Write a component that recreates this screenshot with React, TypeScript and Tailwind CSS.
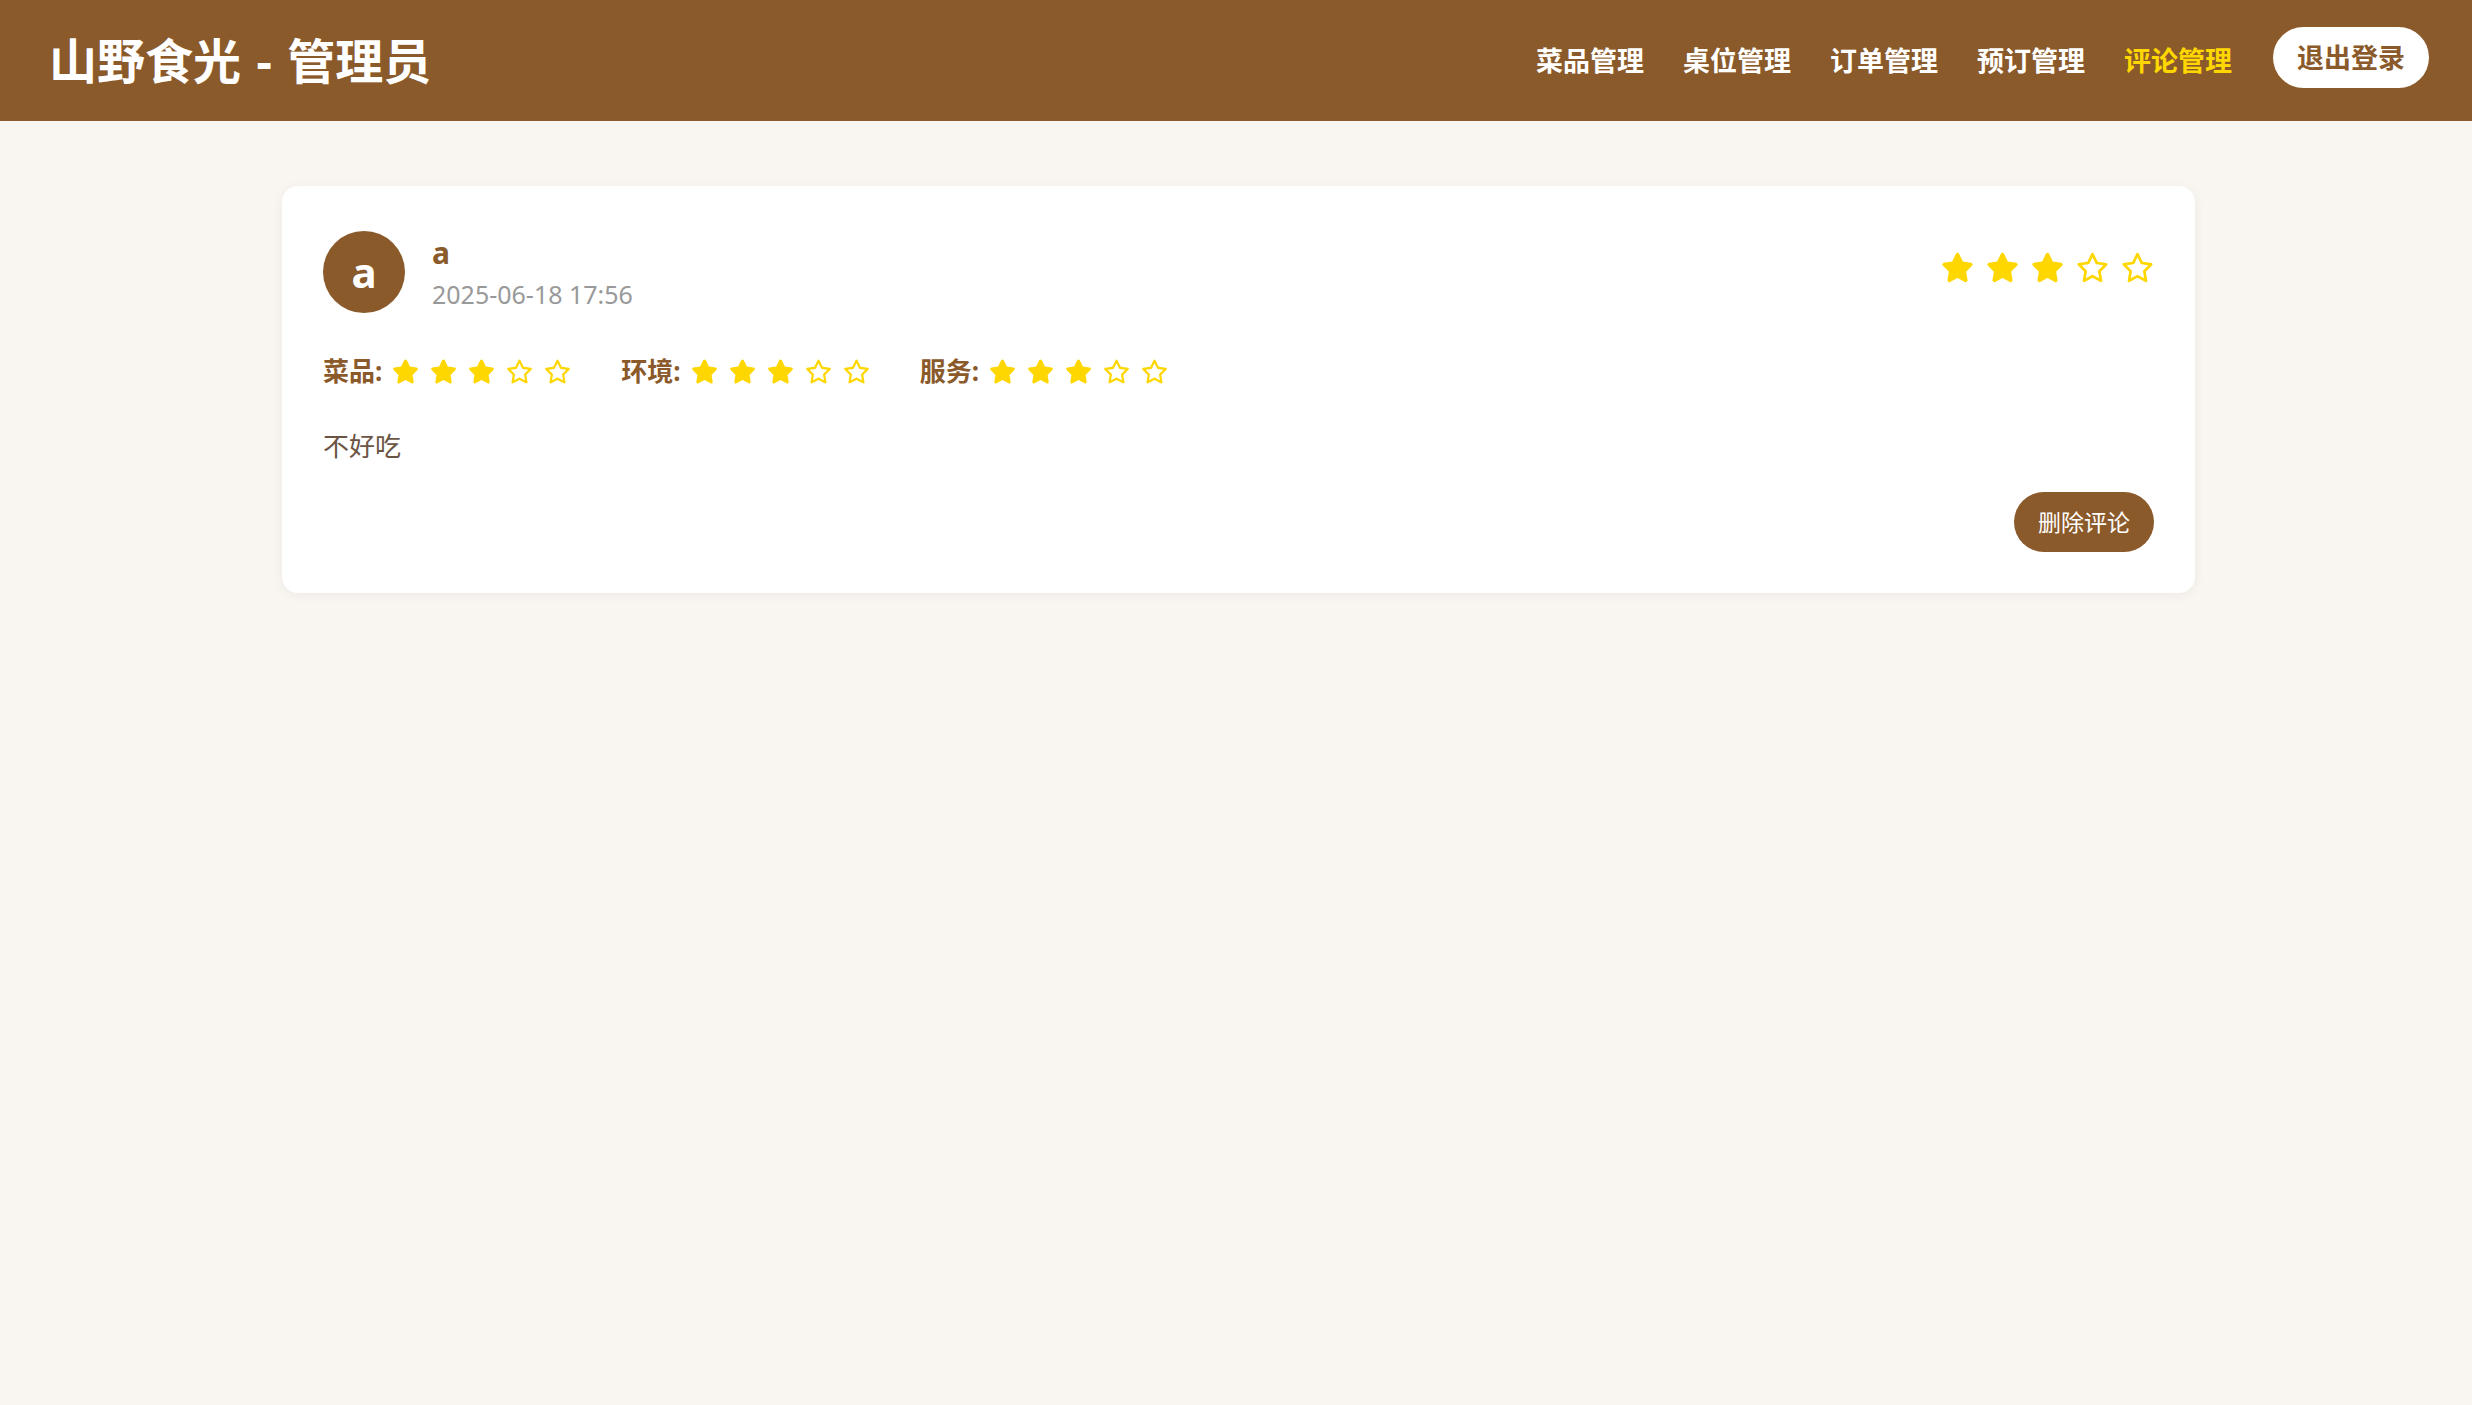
import React from "react";
import { FaStar, FaRegStar } from "react-icons/fa6";

const FONT = { fontFamily: '"Noto Sans", "Noto Sans CJK SC", sans-serif' };

function Stars({ value, size, gap }: { value: number; size: number; gap: string }) {
  return (
    <div className={`flex items-center ${gap}`}>
      {[1, 2, 3, 4, 5].map((i) =>
        i <= value ? (
          <FaStar key={i} size={size} className="text-[#FFD700] shrink-0" />
        ) : (
          <FaRegStar key={i} size={size} className="text-[#FFD700] shrink-0" />
        )
      )}
    </div>
  );
}

function SubRating({ label, value }: { label: string; value: number }) {
  return (
    <div className="flex items-center gap-[10px]">
      <span className="text-[26px] leading-[37px] font-bold text-[#8B5A2B]">{label}:</span>
      <Stars value={value} size={27} gap="gap-[11px]" />
    </div>
  );
}

export default function App() {
  const nav = ["菜品管理", "桌位管理", "订单管理", "预订管理", "评论管理"];
  return (
    <div className="min-h-screen w-full bg-[#f9f6f1]" style={FONT}>
      <header className="h-[121px] bg-[#8B5A2B] flex items-center justify-between pl-[49px] pr-[43px]">
        <h1 className="text-[48px] leading-none font-bold text-white [word-spacing:3px]">山野食光 - 管理员</h1>
        <nav className="flex items-center">
          <ul className="flex items-center gap-[39px]">
            {nav.map((n) => (
              <li
                key={n}
                className={`text-[27px] leading-[40px] font-bold ${
                  n === "评论管理" ? "text-[#FFD700]" : "text-white"
                }`}
              >
                {n}
              </li>
            ))}
          </ul>
          <button className="ml-[41px] mb-[6px] rounded-full bg-white px-[24px] py-[10px] text-[27px] leading-[41px] font-bold text-[#8B5A2B]">
            退出登录
          </button>
        </nav>
      </header>

      <main className="pt-[65px] pl-[5px]">
        <div className="mx-auto w-[1913px] rounded-[16px] bg-white px-[41px] pt-[44px] pb-[41px] shadow-[0_2px_12px_rgba(0,0,0,0.05)]">
          <div className="flex items-start justify-between">
            <div className="flex items-center gap-[27px]">
              <div className="flex h-[82px] w-[82px] items-center justify-center rounded-full bg-[#8B5A2B] text-[42px] leading-none font-bold text-white">
                a
              </div>
              <div className="flex flex-col">
                <span className="text-[30px] leading-[45px] font-bold text-[#8B5A2B]">a</span>
                <span className="text-[25px] leading-[38px] text-[#999999]">2025-06-18 17:56</span>
              </div>
            </div>
            <div className="mt-[21px]">
              <Stars value={3} size={33} gap="gap-[12px]" />
            </div>
          </div>

          <div className="mt-[40px] flex items-center gap-[50px]">
            <SubRating label="菜品" value={3} />
            <SubRating label="环境" value={3} />
            <SubRating label="服务" value={3} />
          </div>

          <p className="mt-[35px] text-[26px] leading-[42px] text-[#6b5444]">不好吃</p>

          <div className="mt-[25px] flex justify-end">
            <button className="rounded-full bg-[#8B5A2B] px-[24px] py-[13px] text-[23px] leading-[34px] text-white">
              删除评论
            </button>
          </div>
        </div>
      </main>
    </div>
  );
}
